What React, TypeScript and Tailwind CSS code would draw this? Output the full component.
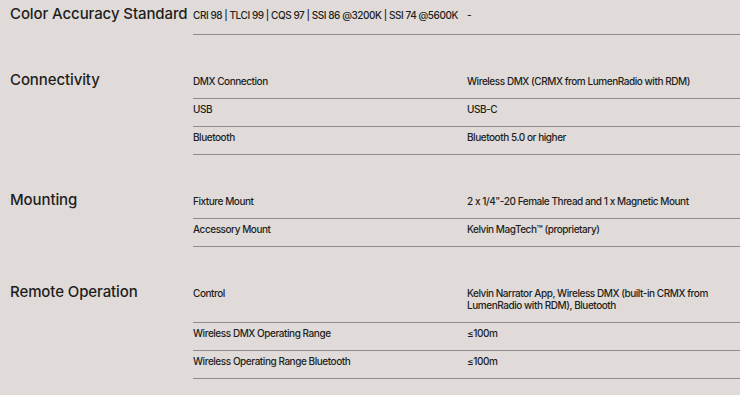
import React from "react";

type Row = { label: string; value: string };
type Section = { title: string; rows: Row[] };

const sections: Section[] = [
  {
    title: "Color Accuracy Standard",
    rows: [{ label: "CRI 98 | TLCI 99 | CQS 97 | SSI 86 @3200K | SSI 74 @5600K", value: "-" }],
  },
  {
    title: "Connectivity",
    rows: [
      { label: "DMX Connection", value: "Wireless DMX (CRMX from LumenRadio with RDM)" },
      { label: "USB", value: "USB-C" },
      { label: "Bluetooth", value: "Bluetooth 5.0 or higher" },
    ],
  },
  {
    title: "Mounting",
    rows: [
      { label: "Fixture Mount", value: "2 x 1/4\"-20 Female Thread and 1 x Magnetic Mount" },
      { label: "Accessory Mount", value: "Kelvin MagTech™ (proprietary)" },
    ],
  },
  {
    title: "Remote Operation",
    rows: [
      {
        label: "Control",
        value: "Kelvin Narrator App, Wireless DMX (built-in CRMX from LumenRadio with RDM), Bluetooth",
      },
      { label: "Wireless DMX Operating Range", value: "≤100m" },
      { label: "Wireless Operating Range Bluetooth", value: "≤100m" },
    ],
  },
];

export default function App() {
  return (
    <div
      className="w-[740px] h-[395px] overflow-hidden bg-[#e0dbd8] text-[#1e1e1e] pl-[10px] pt-[5px]"
      style={{ fontFamily: "Inter, 'Noto Sans', sans-serif" }}
    >
      <div className="flex flex-col gap-[36px]">
        {sections.map((s, i) => (
          <div key={s.title} className="flex">
            <h2 className="w-[183px] shrink-0 text-[15px] leading-[18px] font-medium tracking-[-0.1px] whitespace-nowrap">
              {s.title}
            </h2>
            <div className="flex-1">
              {s.rows.map((r) => (
                <div
                  key={r.label}
                  className={
                    i === 0
                      ? "grid grid-cols-[274px_1fr] border-b border-[#8f8b89] pt-[4px] pb-[13px] text-[10px] leading-[12px] font-medium tracking-[-0.45px]"
                      : "grid grid-cols-[274px_1fr] border-b border-[#8f8b89] pt-[4px] pb-[11px] text-[10px] leading-[12px] font-medium tracking-[-0.45px]"
                  }
                >
                  <span className="whitespace-nowrap">{r.label}</span>
                  <span className="pr-[12px]">{r.value}</span>
                </div>
              ))}
            </div>
          </div>
        ))}
      </div>
    </div>
  );
}
